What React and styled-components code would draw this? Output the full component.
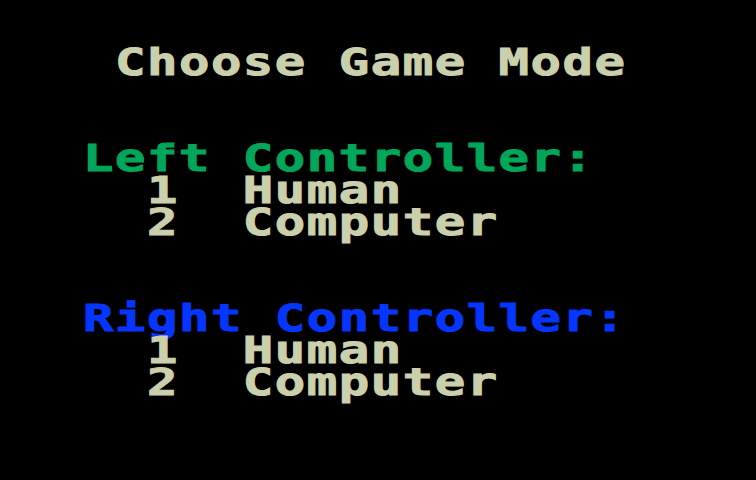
import styled, { createGlobalStyle } from "styled-components";

const GlobalStyle = createGlobalStyle`
  html, body {
    margin: 0;
    padding: 0;
    background: #000;
  }
  body {
    width: 756px;
    height: 480px;
    overflow: hidden;
  }
`;

const COLORS = {
  tan: "#cbd0ac",
  green: "#00a75a",
  blue: "#0536ff",
};

const Screen = styled.main`
  width: 756px;
  height: 480px;
  box-sizing: border-box;
  overflow: hidden;
  background: #000;
  padding: 46px 0 0 83px;
  display: flex;
  flex-direction: column;
  align-items: flex-start;
  gap: 64px;
`;

const Block = styled.section`
  display: flex;
  flex-direction: column;
  align-items: flex-start;
`;

// 8px-wide character cells: glyphs are stretched sideways so each one lands on a 32px column
const Line = styled.div`
  height: 32px;
  font-family: "DejaVu Sans Mono", "Liberation Mono", monospace;
  font-weight: bold;
  font-size: 38px;
  line-height: 32px;
  letter-spacing: 1.16px;
  white-space: pre;
  color: ${({ $color }) => COLORS[$color] || COLORS.tan};
  -webkit-text-stroke: 1px ${({ $color }) => COLORS[$color] || COLORS.tan};
  transform: scaleX(1.33);
  transform-origin: left center;
`;

const controllers = [
  { label: "Left Controller:", color: "green" },
  { label: "Right Controller:", color: "blue" },
];

const options = ["Human", "Computer"];

export default function App() {
  return (
    <>
      <GlobalStyle />
      <Screen>
        <Block>
          <Line>{" Choose Game Mode"}</Line>
        </Block>
        {controllers.map((c) => (
          <Block key={c.label}>
            <Line $color={c.color}>{c.label}</Line>
            {options.map((opt, i) => (
              <Line key={opt}>{`  ${i + 1}  ${opt}`}</Line>
            ))}
          </Block>
        ))}
      </Screen>
    </>
  );
}
